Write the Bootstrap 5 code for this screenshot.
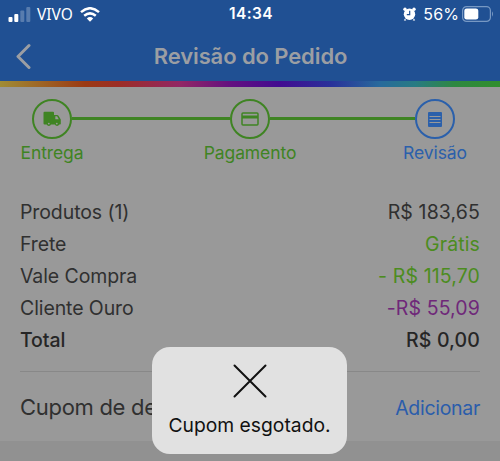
<!DOCTYPE html>
<html lang="pt-BR">
<head>
<meta charset="utf-8">
<meta name="viewport" content="width=device-width, initial-scale=1">
<title>Revisão do Pedido</title>
<link href="https://cdn.jsdelivr.net/npm/bootstrap@5.3.0/dist/css/bootstrap.min.css" rel="stylesheet">
<style>
body{font-family:Inter,"Liberation Sans",sans-serif;background:#999;color:#303030;width:500px;height:461px;overflow:hidden}
svg{display:block;flex:none}
.app-header{background:#205093;height:81px}
.status{height:28px;color:#fff;font-size:16px;line-height:28px}
.status>div{flex:1 1 0}
.status-end{padding-right:6px}
.carrier{font-family:"Noto Sans",sans-serif;font-size:15.5px;margin-left:6px;margin-right:7px}
.clock{font-weight:600;font-size:15.5px;letter-spacing:.4px}
.percent{font-size:16px;margin:0 3px 0 7px;letter-spacing:.1px}
.titlebar{height:53px;color:#9b9ea3}
.titlebar h1{font-size:22px;font-weight:600;line-height:28px;letter-spacing:-.1px;padding:2px 0 0 1px}
.edge{width:36px}
.rainbow{height:6px;background:linear-gradient(90deg,#a08c35 0,#9b3a14 17%,#9c2d27 24%,#922765 36%,#641080 46%,#420b91 56%,#29309a 66%,#286a9c 76%,#287b83 83%,#2e8840 91%,#318e2d 100%)}
.stepper{height:104px;padding:12px 45px 0 32px}
.step{color:#3f8423;font-size:17.5px;line-height:22px;letter-spacing:-.1px}
.step.current{color:#2b60ab}
.dot{width:40px;height:40px;border:2px solid currentColor;border-radius:50%;margin-bottom:3px}
.rail{height:3px;background:#3f8423;flex:158 1 0;margin-top:18px}
.rail-last{flex-grow:145}
.step-box{width:40px}
.step-box span{white-space:nowrap}
.totals{padding:5px 20px 0;font-size:19.5px}
.line{height:32px;line-height:32px}
.line span:first-child{letter-spacing:-.1px}
.line span:last-child{letter-spacing:.12px}
.ok{color:#4c8c20}
.gold{color:#6f2879}
.strong-line{font-weight:500;color:#262626}
.coupon{margin:15px 20px 0;border-top:1px solid #888;height:70px;font-size:22px;letter-spacing:-.3px}
.coupon span{padding-top:2px}
.coupon a{color:#2b5dab;font-size:19.5px}
.foot{background:#919191;height:20px}
.notice{left:152px;top:347px;width:195px;height:107px;border-radius:18px;background:#e1e1e1;color:#111;font-size:19.3px}
.notice svg{margin-top:17px}
.notice div{margin-top:14px;line-height:26px;white-space:nowrap}
</style>
</head>
<body class="position-relative">
<header class="app-header">
  <div class="status d-flex align-items-center">
    <div class="d-flex align-items-center ps-2">
      <svg width="23" height="15" viewBox="0 0 23 15" fill="#fff"><rect x=".5" y="10" width="4" height="5" rx="1"/><rect x="6.3" y="7" width="4" height="8" rx="1"/><rect x="12.3" y="3.5" width="4" height="11.5" rx="1" opacity=".25"/><rect x="18.3" y="0" width="4" height="15" rx="1" opacity=".25"/></svg>
      <span class="carrier">VIVO</span>
      <svg width="20" height="15" viewBox="0 0 20 15"><g fill="none" stroke="#fff" stroke-width="2.5"><path d="M1 5.1Q10-2.6 19 5.1"/><path d="M4.2 8.8Q10 3.9 15.8 8.8"/></g><path d="M6.8 11.4Q10 8.7 13.2 11.4L10 14.8Z" fill="#fff"/></svg>
    </div>
    <span class="clock">14:34</span>
    <div class="status-end d-flex align-items-center justify-content-end">
      <svg width="13" height="14" viewBox="0 0 13 14"><g fill="#fff"><circle cx="6.5" cy="7.3" r="5.7"/><circle cx="2" cy="2.2" r="1.7"/><circle cx="11" cy="2.2" r="1.7"/><path d="M2 11.5L.8 13.5h2.5zM11 11.5l1.2 2H9.7z"/></g><path d="M6.7 3.8v3.9H3.8" fill="none" stroke="#205093" stroke-width="1.2"/></svg>
      <span class="percent">56%</span>
      <svg width="32" height="16" viewBox="0 0 32 16"><rect x=".6" y=".6" width="27.8" height="14.8" rx="4" fill="none" stroke="#7798c3" stroke-width="1.2"/><rect x="2.3" y="2.4" width="14" height="11.2" rx="2.4" fill="#fff"/><path d="M30 5.3q2 2.7 0 5.4z" fill="#7798c3"/></svg>
    </div>
  </div>
  <div class="titlebar d-flex align-items-center justify-content-between">
    <div class="edge"><svg class="mt-1 ms-3" width="16" height="27" viewBox="0 0 16 27"><path d="M13 2.5L2 13.5 13 24.5" fill="none" stroke="#9b9ea3" stroke-width="3" stroke-linecap="round" stroke-linejoin="round"/></svg></div>
    <h1 class="mb-0">Revisão do Pedido</h1>
    <div class="edge"></div>
  </div>
</header>
<div class="rainbow"></div>
<main>
  <section class="stepper d-flex align-items-start">
    <div class="step step-box d-flex flex-column align-items-center">
      <div class="dot d-flex align-items-center justify-content-center"><svg width="18" height="16" viewBox="0 0 18 16" fill="currentColor"><path d="M1.5.8H10q1 0 1 1V4h3.2q.8 0 1.3.7l2 3.2q.3.5.3 1v3.8q0 .7-.8.7h-.8a2.300 2.300 0 0 1-4.300 0H8a2.300 2.300 0 0 1-4.300 0H1.500q-1 0-1-1V1.800q0-1 1-1z"/><path d="M12.300 5.300h1.800l1.700 2.900h-3.500z" fill="#999"/><circle cx="5.800" cy="12.600" r=".9" fill="#999"/><circle cx="13.800" cy="12.600" r=".9" fill="#999"/></svg></div>
      <span>Entrega</span>
    </div>
    <div class="rail"></div>
    <div class="step step-box d-flex flex-column align-items-center">
      <div class="dot d-flex align-items-center justify-content-center"><svg width="18" height="14" viewBox="0 0 18 14"><rect x="1" y="1" width="16" height="12" rx="1" fill="none" stroke="currentColor" stroke-width="1.500"/><path d="M1 3.500h16v3H1z" fill="currentColor"/></svg></div>
      <span>Pagamento</span>
    </div>
    <div class="rail rail-last"></div>
    <div class="step step-box current d-flex flex-column align-items-center">
      <div class="dot d-flex align-items-center justify-content-center"><svg width="14" height="15" viewBox="0 0 14 15"><rect width="14" height="15" rx="1" fill="currentColor"/><path d="M1.500 4.500h11M1.500 7.500h11M1.500 10.500h11" stroke="#999" stroke-width="1"/></svg></div>
      <span>Revisão</span>
    </div>
  </section>
  <section class="totals">
    <div class="line d-flex justify-content-between"><span>Produtos (1)</span><span>R$ 183,65</span></div>
    <div class="line d-flex justify-content-between"><span>Frete</span><span class="ok">Grátis</span></div>
    <div class="line d-flex justify-content-between"><span>Vale Compra</span><span class="ok">- R$ 115,70</span></div>
    <div class="line d-flex justify-content-between"><span>Cliente Ouro</span><span class="gold">-R$ 55,09</span></div>
    <div class="line strong-line d-flex justify-content-between"><span>Total</span><span>R$ 0,00</span></div>
  </section>
  <section class="coupon d-flex align-items-center justify-content-between"><span>Cupom de desconto</span><a href="#" class="text-decoration-none pt-1">Adicionar</a></section>
  <div class="foot"></div>
</main>
<div class="notice position-absolute d-flex flex-column align-items-center" role="alert">
  <svg width="34" height="34" viewBox="0 0 34 34"><path d="M1.500 1.500l31 31M32.500 1.500l-31 31" stroke="#111" stroke-width="2" stroke-linecap="round"/></svg>
  <div>Cupom esgotado.</div>
</div>
<script src="https://cdn.jsdelivr.net/npm/bootstrap@5.3.0/dist/js/bootstrap.bundle.min.js"></script>
</body>
</html>
